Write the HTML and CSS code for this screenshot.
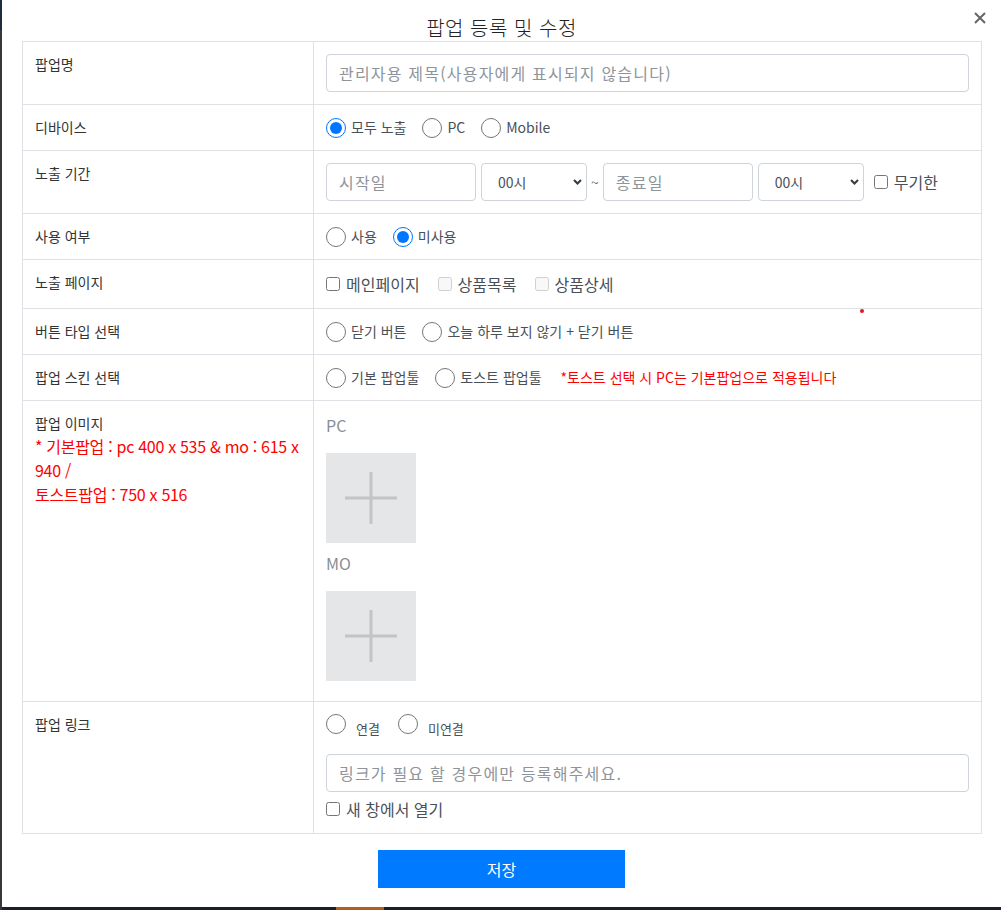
FILE: index.html
```html
<!DOCTYPE html>
<html lang="ko">
<head>
<meta charset="utf-8">
<title>팝업 등록 및 수정</title>
<link rel="stylesheet" href="styles.css">
</head>
<body>
<div class="modal">
  <h2 class="modal-title">팝업 등록 및 수정</h2>
  <button class="close" type="button" aria-label="닫기">
    <svg viewBox="0 0 12 12" width="12" height="12"><path d="M1 1L11 11M11 1L1 11" stroke="#666" stroke-width="2" fill="none"/></svg>
  </button>
  <span class="dot"></span>

  <div class="form-grid">
    <div class="th">팝업명</div>
    <div class="td"><input class="form-control" type="text" placeholder="관리자용 제목(사용자에게 표시되지 않습니다)"></div>

    <div class="th">디바이스</div>
    <div class="td">
      <div class="opts">
        <label class="opt"><input type="radio" name="device" checked>모두 노출</label>
        <label class="opt"><input type="radio" name="device">PC</label>
        <label class="opt"><input type="radio" name="device">Mobile</label>
      </div>
    </div>

    <div class="th">노출 기간</div>
    <div class="td">
      <div class="period">
        <input class="form-control date" type="text" placeholder="시작일">
        <div class="sel">
          <select><option>00시</option></select>
          <svg viewBox="0 0 9 6" width="9" height="6"><path d="M1 1L4.5 4.5L8 1" stroke="#343a40" stroke-width="2" fill="none"/></svg>
        </div>
        <span class="tilde">~</span>
        <input class="form-control date" type="text" placeholder="종료일">
        <div class="sel">
          <select><option>00시</option></select>
          <svg viewBox="0 0 9 6" width="9" height="6"><path d="M1 1L4.5 4.5L8 1" stroke="#343a40" stroke-width="2" fill="none"/></svg>
        </div>
        <label class="chk"><input type="checkbox">무기한</label>
      </div>
    </div>

    <div class="th">사용 여부</div>
    <div class="td">
      <div class="opts">
        <label class="opt"><input type="radio" name="use">사용</label>
        <label class="opt"><input type="radio" name="use" checked>미사용</label>
      </div>
    </div>

    <div class="th">노출 페이지</div>
    <div class="td">
      <div class="opts opts-lg">
        <label class="opt"><input type="checkbox">메인페이지</label>
        <label class="opt"><input type="checkbox" disabled>상품목록</label>
        <label class="opt"><input type="checkbox" disabled>상품상세</label>
      </div>
    </div>

    <div class="th">버튼 타입 선택</div>
    <div class="td">
      <div class="opts">
        <label class="opt"><input type="radio" name="btn">닫기 버튼</label>
        <label class="opt"><input type="radio" name="btn">오늘 하루 보지 않기 + 닫기 버튼</label>
      </div>
    </div>

    <div class="th">팝업 스킨 선택</div>
    <div class="td">
      <div class="opts">
        <label class="opt"><input type="radio" name="skin">기본 팝업툴</label>
        <label class="opt"><input type="radio" name="skin">토스트 팝업툴</label>
        <span class="note">*토스트 선택 시 PC는 기본팝업으로 적용됩니다</span>
      </div>
    </div>

    <div class="th">팝업 이미지<span class="req">* 기본팝업 : pc 400 x 535 &amp; mo : 615 x<br>940 /<br>토스트팝업 : 750 x 516</span></div>
    <div class="td">
      <div class="thumb-label">PC</div>
      <div class="thumb"><svg viewBox="0 0 52 52" width="52" height="52"><path d="M0 26H52M26 0V52" stroke="#c4c4c6" stroke-width="3" fill="none"/></svg></div>
      <div class="thumb-label">MO</div>
      <div class="thumb"><svg viewBox="0 0 52 52" width="52" height="52"><path d="M0 26H52M26 0V52" stroke="#c4c4c6" stroke-width="3" fill="none"/></svg></div>
    </div>

    <div class="th">팝업 링크</div>
    <div class="td">
      <div class="link-opts">
        <label class="lopt"><input type="radio" name="link">연결</label>
        <label class="lopt"><input type="radio" name="link">미연결</label>
      </div>
      <input class="form-control" type="text" placeholder="링크가 필요 할 경우에만 등록해주세요.">
      <label class="newwin"><input type="checkbox">새 창에서 열기</label>
    </div>
  </div>

  <div class="actions"><button class="btn-save" type="button">저장</button></div>
</div>
</body>
</html>
```

FILE: styles.css
```css
* { box-sizing: border-box; }

html, body { margin: 0; padding: 0; }

body {
  width: 1001px;
  height: 910px;
  overflow: hidden;
  font-family: "Noto Sans CJK KR", "Noto Sans", sans-serif;
  font-size: 14px;
  line-height: 1.5;
  color: #333;
  background-color: #1b1e2c;
  background-image:
    linear-gradient(to right, transparent 336px, #b0601e 336px, #b0601e 384px, transparent 384px),
    linear-gradient(to bottom, #1f2c3e 0, #1f2c3e 30px, #383838 30px);
  background-repeat: no-repeat;
  background-size: 100% 3px, 2px 100%;
  background-position: left bottom, left top;
}

.modal {
  position: relative;
  margin-left: 2px;
  width: 999px;
  height: 907px;
  background: #fff;
}

.modal-title {
  margin: 0;
  height: 41px;
  padding-top: 14px;
  font-size: 20px;
  line-height: 27px;
  font-weight: 300;
  letter-spacing: 0.5px;
  text-align: center;
  color: #222;
}

.close {
  position: absolute;
  top: 12px;
  right: 15px;
  width: 12px;
  height: 12px;
  padding: 0;
  border: 0;
  background: none;
  display: block;
}
.close svg { display: block; }

.dot {
  position: absolute;
  left: 858px;
  top: 309px;
  width: 4px;
  height: 4px;
  border-radius: 50%;
  background: #e8141d;
}

.form-grid {
  margin: 0 19px 0 20px;
  display: grid;
  grid-template-columns: 291px 668px;
  border-top: 1px solid #dee2e6;
  border-left: 1px solid #dee2e6;
}

.th, .td {
  padding: 12px;
  border-right: 1px solid #dee2e6;
  border-bottom: 1px solid #dee2e6;
}

.th { color: #333; }

.req {
  display: block;
  color: #f00;
  font-size: 16px;
  line-height: 24px;
  letter-spacing: -0.3px;
  white-space: nowrap;
}

.form-control {
  display: block;
  width: 100%;
  height: 38px;
  padding: 6px 12px;
  font-family: inherit;
  font-size: 16px;
  line-height: 1.5;
  color: #495057;
  background: #fff;
  border: 1px solid #ced4da;
  border-radius: 4px;
  outline: none;
}
.form-control::placeholder { color: #8e949a; opacity: 1; letter-spacing: 1.2px; }

.opts {
  display: flex;
  align-items: center;
  height: 21px;
  color: #495057;
}
.opts-lg { height: 24px; font-size: 16px; }

.opt {
  display: flex;
  align-items: center;
  margin-right: 16px;
}
.opt input[type="radio"] {
  width: 20px;
  height: 20px;
  margin: 0 5px 0 0;
}
.opt input[type="checkbox"] {
  width: 14px;
  height: 14px;
  margin: 0 6px 0 0;
}
.opts-lg .opt { margin-right: 18px; }

.note { color: #f00; margin-left: 3px; }

.period { display: flex; align-items: center; }
.period .date { width: 150px; }

.sel {
  position: relative;
  width: 106px;
  margin-left: 5px;
}
.sel select {
  display: block;
  width: 100%;
  height: 38px;
  padding: 0 28px 0 16px;
  font-family: inherit;
  font-size: 14px;
  color: #495057;
  background: #fff;
  border: 1px solid #ced4da;
  border-radius: 4px;
  appearance: none;
  -webkit-appearance: none;
  outline: none;
}
.sel svg {
  position: absolute;
  right: 5px;
  top: 16px;
  pointer-events: none;
}

.tilde { margin: 0 4px 0 4px; color: #666; }

.chk {
  display: flex;
  align-items: center;
  margin-left: 10px;
  font-size: 16px;
  color: #495057;
}
.chk input {
  width: 14px;
  height: 14px;
  margin: 0 6px 0 0;
}

.thumb-label {
  font-size: 16px;
  line-height: 24px;
  color: #868e96;
  margin-bottom: 16px;
}
.thumb {
  width: 90px;
  height: 90px;
  margin-bottom: 8px;
  background: #e5e6e8;
  display: flex;
  align-items: center;
  justify-content: center;
}
.thumb svg { display: block; }

.link-opts {
  display: flex;
  align-items: baseline;
  height: 24px;
  margin-bottom: 16px;
  font-size: 13px;
  color: #495057;
}
.lopt {
  display: flex;
  align-items: baseline;
  margin-right: 18px;
}
.lopt input {
  width: 20px;
  height: 20px;
  margin: 0 10px 0 0;
}

.newwin {
  display: flex;
  align-items: center;
  height: 24px;
  margin-top: 5px;
  font-size: 16px;
  color: #495057;
}
.newwin input {
  width: 14px;
  height: 14px;
  margin: 0 6px 0 0;
}

.actions {
  display: flex;
  justify-content: center;
  padding-top: 16px;
}
.btn-save {
  width: 247px;
  height: 38px;
  padding: 0;
  border: 0;
  border-radius: 0;
  background: #007bff;
  color: #fff;
  font-family: inherit;
  font-size: 16px;
}
```
